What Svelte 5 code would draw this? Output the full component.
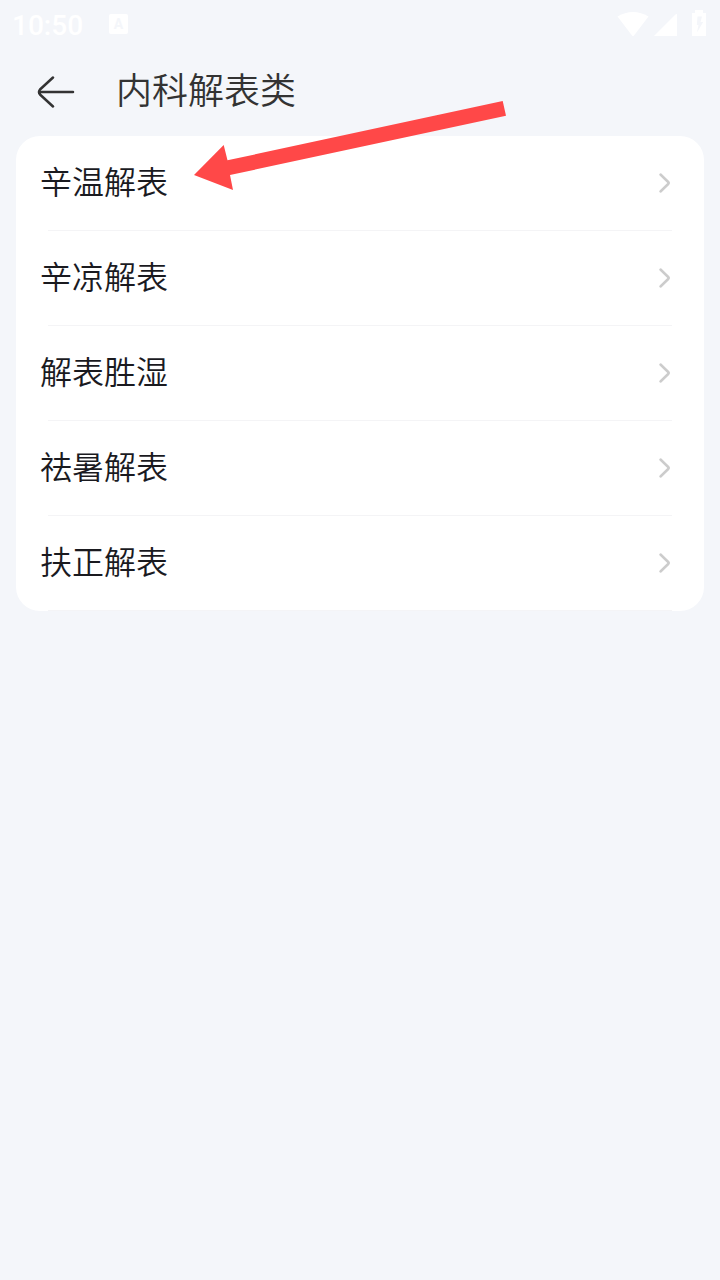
<script lang="ts">
	const items: string[] = ['辛温解表', '辛凉解表', '解表胜湿', '祛暑解表', '扶正解表'];
</script>

<div class="screen">
	<div class="status">
		<span class="time">10:50</span>
		<span class="badge">A</span>
		<div class="system">
			<svg width="32" height="24" viewBox="0 0 32 24">
				<path d="M.5 4.500Q8 0 16 0T31.500 4.500L17 23.500Q16 24.500 15 23.500Z" fill="#fff" />
			</svg>
			<svg width="23" height="24" viewBox="0 0 23 24">
				<path d="M0 24 22 2Q23 1.500 23 3V24Z" fill="#fff" />
			</svg>
			<svg class="battery" width="14" height="26" viewBox="0 0 14 26">
				<path d="M3 0H11V3H14V26H0V3H3Z" fill="#fff" />
				<path d="M5.500 6.500H10L8.500 12H11.200L5 22.500 6.500 15H4.800Z" fill="#f4f6fa" />
			</svg>
		</div>
	</div>

	<header>
		<svg width="38" height="34" viewBox="0 0 38 34" fill="none" stroke="#333" stroke-width="2.5" stroke-linecap="round" stroke-linejoin="round">
			<path d="M36 17H2M16 2.500 3 14.500Q1 17 3 19.500L16 31.500" />
		</svg>
		<h1>内科解表类</h1>
	</header>

	<ul>
		{#each items as item}
			<li>
				<span>{item}</span>
				<svg width="14" height="22" viewBox="0 0 14 22" fill="none" stroke="#ccc" stroke-width="2.5" stroke-linecap="round" stroke-linejoin="round">
					<path d="M2.500 2.500 10.200 10Q11.200 11 10.200 12L2.500 19.500" />
				</svg>
			</li>
		{/each}
	</ul>

	<svg class="pointer" width="312" height="90" viewBox="0 0 312 90">
		<path d="M0 75 29.700 45 33.500 60.300 308.700 1 312 15.800 36 75 39 90Z" fill="#ff4848" />
	</svg>
</div>

<style>
	:global(body) { background: #f4f6fa; }
	.screen {
		position: relative; box-sizing: border-box; height: 1280px; padding: 0 16px;
		background: #f4f6fa; overflow: hidden;
		font-family: "Noto Sans CJK SC", sans-serif; font-weight: 350;
	}
	.status {
		display: flex; align-items: center; height: 48px; margin: 0 -4px; color: #fff;
	}
	.time {
		width: 97px; font: 500 28px/48px Roboto, sans-serif; padding-top: 3px;
	}
	.badge {
		width: 19px; height: 20px; border-radius: 2px; background: #fff;
		color: #f4f6fa; font: 700 14px/20px Roboto, sans-serif; text-align: center;
	}
	.system {
		display: flex; align-items: flex-end; height: 26px; margin: 0 2px 2px auto;
	}
	.system svg { display: block; margin-right: 5px; }
	.system .battery { margin: 0 0 0 10px; }
	header {
		display: flex; align-items: center; height: 88px; padding-left: 21px;
	}
	h1 {
		margin: 0 0 8px 41px; font-size: 36px; font-weight: 350; line-height: 52px; color: #333;
	}
	ul {
		margin: 0; padding: 0; list-style: none; background: #fff; border-radius: 24px;
	}
	li {
		position: relative; display: flex; align-items: center; justify-content: space-between;
		box-sizing: border-box; height: 95px; padding: 0 32px 1px 24px;
	}
	li::after {
		content: ''; position: absolute; left: 32px; right: 32px; bottom: 0;
		height: 1px; background: #f4f4f6;
	}
	li span {
		margin-bottom: 7px; font-size: 32px; line-height: 46px; color: #1a1a1f;
	}
	.pointer {
		position: absolute; left: 194px; top: 100px; pointer-events: none;
	}
</style>
